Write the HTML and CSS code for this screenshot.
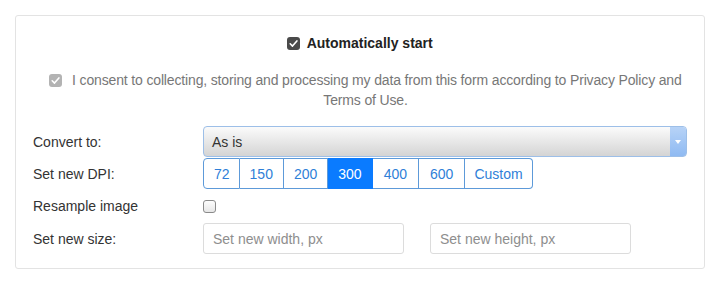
FILE: index.html
```html
<!DOCTYPE html>
<html lang="en">
<head>
    <meta charset="UTF-8">
    <meta name="viewport" content="width=device-width, initial-scale=1.0">
    <title>Convert options</title>
    <link rel="stylesheet" href="styles.css">
</head>
<body>
    <div class="card">
        <div class="auto-start">
            <span class="check check-dark"><svg viewBox="0 0 13 13" width="13" height="13"><path d="M3.2 6.8 L5.5 9.1 L9.9 3.9" fill="none" stroke="#fff" stroke-width="1.6" stroke-linecap="round" stroke-linejoin="round"/></svg></span>
            <span>Automatically start</span>
        </div>
        <p class="consent">
            <span class="check check-gray"><svg viewBox="0 0 13 13" width="13" height="13"><path d="M3.2 6.8 L5.5 9.1 L9.9 3.9" fill="none" stroke="#fff" stroke-width="1.6" stroke-linecap="round" stroke-linejoin="round"/></svg></span>
            I consent to collecting, storing and processing my data from this form according to Privacy Policy and Terms of Use.
        </p>

        <div class="options">
            <label class="opt-label">Convert to:</label>
            <div class="select">
                <span>As is</span>
                <span class="select-arrow"><svg viewBox="0 0 6 4" width="6" height="4"><path d="M0 0 L6 0 L3 4 Z" fill="#fff"/></svg></span>
            </div>

            <label class="opt-label">Set new DPI:</label>
            <div class="btn-group">
                <button class="dpi">72</button>
                <button class="dpi">150</button>
                <button class="dpi">200</button>
                <button class="dpi active">300</button>
                <button class="dpi">400</button>
                <button class="dpi">600</button>
                <button class="dpi">Custom</button>
            </div>

            <label class="opt-label">Resample image</label>
            <div class="row-check">
                <span class="check check-empty"></span>
            </div>

            <label class="opt-label">Set new size:</label>
            <div class="size-inputs">
                <input type="text" class="size-input" placeholder="Set new width, px">
                <input type="text" class="size-input size-height" placeholder="Set new height, px">
            </div>
        </div>
    </div>
</body>
</html>
```

FILE: styles.css
```css
body {
    margin: 0;
    padding: 15px;
    font-family: "Liberation Sans", Arial, sans-serif;
    font-size: 14px;
    color: #333;
    background-color: #fff;
}
.card {
    box-sizing: border-box;
    width: 690px;
    height: 254px;
    border: 1px solid #e3e3e3;
    border-radius: 3px;
    padding: 17px 17px 16px;
}
.check {
    display: inline-block;
    box-sizing: border-box;
    width: 13px;
    height: 13px;
    border-radius: 3px;
    vertical-align: -2px;
}
.check svg {
    display: block;
}
.check-dark {
    background-color: #4a4a4a;
}
.check-gray {
    background-color: #b3b3b3;
}
.check-empty {
    border: 1px solid #8a8a8a;
    background: linear-gradient(#fdfdfd, #e6e6e6);
}
.auto-start {
    text-align: center;
    font-weight: bold;
    color: #222;
    line-height: 20px;
}
.auto-start .check {
    margin-right: 3px;
}
.consent {
    margin: 17px 0 0;
    padding-left: 11px;
    text-align: center;
    color: #777;
    line-height: 20px;
    letter-spacing: -0.15px;
}
.consent .check {
    margin-right: 6px;
}
.options {
    display: grid;
    grid-template-columns: 170px 1fr;
    row-gap: 1px;
    margin-top: 16px;
    align-items: center;
}
.opt-label {
    color: #333;
}
.select {
    display: flex;
    align-items: center;
    justify-content: space-between;
    box-sizing: border-box;
    height: 31px;
    border: 1px solid #9dbfe8;
    border-radius: 4px;
    background: linear-gradient(#fbfbfb, #d4d4d4);
    padding-left: 8px;
    overflow: hidden;
}
.select-arrow {
    display: flex;
    align-items: center;
    justify-content: center;
    width: 16px;
    height: 100%;
    background: linear-gradient(#b7d3f7, #8fbaf2);
}
.btn-group {
    display: flex;
    height: 31px;
}
.dpi {
    font-family: inherit;
    font-size: 14px;
    color: #2f7fd8;
    background-color: #fff;
    border: 1px solid #5d9ad9;
    border-left: none;
    padding: 0 10px;
    height: 31px;
    cursor: pointer;
}
.dpi:first-child {
    border-left: 1px solid #5d9ad9;
    border-radius: 4px 0 0 4px;
    padding: 0 9px 0 10px;
}
.dpi:nth-child(5),
.dpi:nth-child(6) {
    padding: 0 11px;
}
.dpi:last-child {
    border-radius: 0 4px 4px 0;
    padding: 0 9px;
}
.dpi.active {
    background-color: #0a7bff;
    border-color: #0a7bff;
    color: #fff;
}
.row-check {
    height: 32px;
    display: flex;
    align-items: center;
}
.size-inputs {
    display: flex;
    gap: 26px;
}
.size-input {
    box-sizing: border-box;
    width: 201px;
    height: 31px;
    border: 1px solid #dcdcdc;
    border-radius: 3px;
    padding: 0 9px;
    font-family: inherit;
    font-size: 14px;
    color: #333;
}
.size-input::placeholder {
    color: #8e8e8e;
}
```
